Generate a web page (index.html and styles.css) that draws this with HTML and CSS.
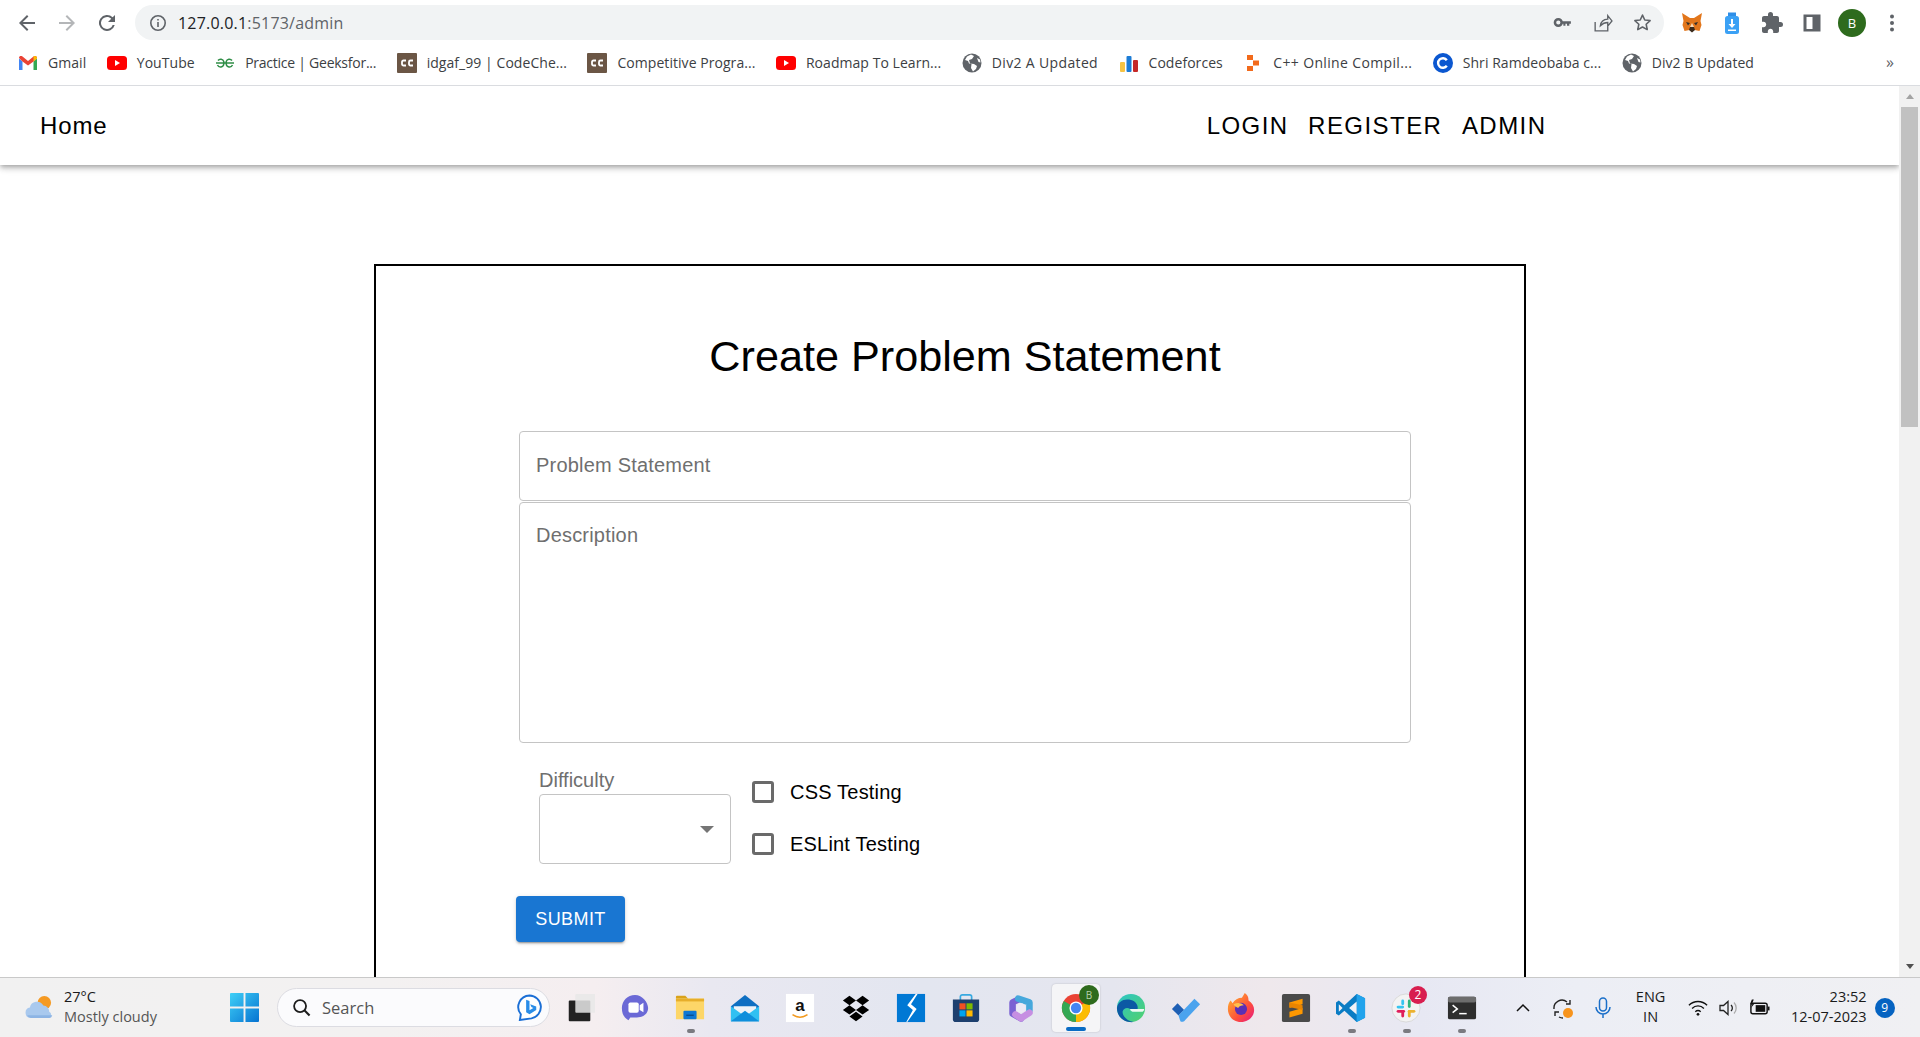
FILE: index.html
```html
<!DOCTYPE html>
<html lang="en">
<head>
    <meta charset="UTF-8">
    <meta name="viewport" content="width=device-width, initial-scale=1.0">
    <title>127.0.0.1:5173/admin</title>
    <link rel="stylesheet" href="styles.css">
</head>
<body>
    <svg class="defs" aria-hidden="true">
        <symbol id="globe" viewBox="0 0 20 20">
            <circle cx="10" cy="10" r="9.500" fill="#5f6368"/>
            <path d="M9 1.500 5 3.500 3 7l3 1 1 2.500 2.500.5L9 15l2 3.500 3-2.500 1-3-3-2-4-.5L7 7l3-1 2-3zM15 5l1.500 4 2 .5-.5-3z" fill="#fff"/>
        </symbol>
        <symbol id="yt" viewBox="0 0 20 20">
            <rect x="0" y="3" width="20" height="14" rx="3.500" fill="#f00"/>
            <path d="M8 7v6l5-3z" fill="#fff"/>
        </symbol>
        <symbol id="cc" viewBox="0 0 20 20">
            <rect width="20" height="20" rx="1" fill="#6b5645"/>
            <path d="M9 7.500H6.500A1.500 1.500 0 0 0 5 9v2a1.500 1.500 0 0 0 1.500 1.500H9M16 7.500h-2.500A1.500 1.500 0 0 0 12 9v2a1.500 1.500 0 0 0 1.500 1.500H16" fill="none" stroke="#fff" stroke-width="1.800"/>
        </symbol>
    </svg>

    <header class="browser">
        <div class="toolbar">
            <div class="tool-nav">
                <svg class="tool-icon" viewBox="0 0 24 24"><path d="M20 11H7.800l5.600-5.600L12 4l-8 8 8 8 1.400-1.400L7.800 13H20z" fill="#5f6368"/></svg>
                <svg class="tool-icon" viewBox="0 0 24 24"><path d="M4 11h12.200l-5.600-5.600L12 4l8 8-8 8-1.400-1.400 5.600-5.600H4z" fill="#b4b6b8"/></svg>
                <svg class="tool-icon" viewBox="0 0 24 24"><path d="M17.650 6.350A8 8 0 1 0 19.730 14h-2.080A6 6 0 1 1 12 6c1.660 0 3.140.69 4.220 1.780L13 11h7V4z" fill="#5f6368"/></svg>
            </div>
            <div class="omnibox">
                <svg class="omni-info" viewBox="0 0 18 18"><circle cx="9" cy="9" r="7.200" fill="none" stroke="#5f6368" stroke-width="1.600"/><path d="M8.200 8h1.600v5H8.200zM8.200 5h1.600v1.600H8.200z" fill="#5f6368"/></svg>
                <span class="url"><span class="url-host">127.0.0.1</span>:5173/admin</span>
                <div class="omni-actions">
                    <svg class="omni-icon" viewBox="0 0 20 20"><circle cx="6" cy="10" r="3.200" fill="none" stroke="#5f6368" stroke-width="2.400"/><path d="M9 8.800h9v2.400h-1.500V13h-2.200v-1.800h-1.500V13h-2v-1.800H9z" fill="#5f6368"/></svg>
                    <svg class="omni-icon" viewBox="0 0 20 20"><path d="M3 9.500V18h12v-4M8 13c.5-4 3-6 7-6.200V3.500l4 5-4 5V10c-3 0-5 1-7 3z" fill="none" stroke="#5f6368" stroke-width="1.300"/></svg>
                    <svg class="omni-icon" viewBox="0 0 24 24"><path d="M12 3.500l2.600 5.600 6.100.7-4.500 4.200 1.200 6.100L12 17.100l-5.400 3 1.200-6.100-4.500-4.200 6.100-.7z" fill="none" stroke="#5f6368" stroke-width="1.800" stroke-linejoin="round"/></svg>
                </div>
            </div>
            <div class="extensions">
                <svg class="ext-icon" viewBox="0 0 24 24">
                    <path d="M2 2l8 5h4l8-5-1.500 8 1 4-2 6-5-1h-5l-5 1-2-6 1-4z" fill="#e2761b"/>
                    <path d="M9 19l1-3h4l1 3-3 2.500z" fill="#3a2a1c"/>
                    <path d="M6 11l4 1-2 2.500zM18 11l-4 1 2 2.500z" fill="#33302c"/>
                    <path d="M10 16l2-4 2 4z" fill="#f5d9b8"/>
                </svg>
                <svg class="ext-icon" viewBox="0 0 24 24">
                    <path d="M8 1.500h8V5H8z" fill="#2f8fe8"/>
                    <rect x="5" y="5" width="14" height="18" rx="2.500" fill="#3ba1f5"/>
                    <path d="M11 8h2v5h2.500L12 17l-3.500-4H11z" fill="#fff"/>
                    <path d="M8 18.500h8V20H8z" fill="#fff"/>
                </svg>
                <svg class="ext-icon" viewBox="0 0 24 24"><path d="M20.500 11H19V7c0-1.100-.9-2-2-2h-4V3.500a2.500 2.500 0 0 0-5 0V5H4c-1.100 0-2 .9-2 2v3.800h1.500c1.500 0 2.700 1.200 2.700 2.700s-1.200 2.700-2.700 2.700H2V20c0 1.100.9 2 2 2h3.800v-1.500c0-1.500 1.200-2.700 2.700-2.700s2.700 1.200 2.700 2.700V22H17c1.100 0 2-.9 2-2v-4h1.500a2.500 2.500 0 0 0 0-5z" fill="#5f6368"/></svg>
                <svg class="ext-icon" viewBox="0 0 24 24"><path d="M3.500 3.500h17v17h-17zM6.500 6h0v12h6V6z" fill="#5f6368" fill-rule="evenodd"/></svg>
                <span class="avatar">B</span>
                <svg class="ext-icon" viewBox="0 0 24 24"><circle cx="12" cy="5.500" r="2" fill="#5f6368"/><circle cx="12" cy="12" r="2" fill="#5f6368"/><circle cx="12" cy="18.500" r="2" fill="#5f6368"/></svg>
            </div>
        </div>

        <nav class="bookmarks">
            <a class="bm">
                <svg class="bm-icon" viewBox="0 0 20 20">
                    <path d="M1 5.500V17h3.500V8.500z" fill="#4285f4"/>
                    <path d="M19 5.500V17h-3.500V8.500z" fill="#34a853"/>
                    <path d="M1 5c0-2 2-2.500 3.500-1.500L10 8l5.500-4.500C17 2.500 19 3 19 5l-3.500 3.500L10 12.500 4.500 8.500z" fill="#ea4335"/>
                    <path d="M15.500 3.500C17 2.500 19 3 19 5.500l-3.500 3z" fill="#fbbc04"/>
                </svg>
                Gmail
            </a>
            <a class="bm"><svg class="bm-icon"><use href="#yt"/></svg>YouTube</a>
            <a class="bm bm-tight">
                <svg class="bm-icon" viewBox="0 0 20 20"><path d="M1 10h18M3 7.500a3.300 3.300 0 0 1 5.800 1V11a3.300 3.300 0 0 1-6.300 1M17 7.500a3.300 3.300 0 0 0-5.800 1V11a3.300 3.300 0 0 0 6.300 1" fill="none" stroke="#2f8d46" stroke-width="1.500"/></svg>
                Practice | Geeksfor...
            </a>
            <a class="bm"><svg class="bm-icon"><use href="#cc"/></svg>idgaf_99 | CodeChe...</a>
            <a class="bm"><svg class="bm-icon"><use href="#cc"/></svg>Competitive Progra...</a>
            <a class="bm"><svg class="bm-icon"><use href="#yt"/></svg>Roadmap To Learn...</a>
            <a class="bm bm-wide"><svg class="bm-icon"><use href="#globe"/></svg>Div2 A Updated</a>
            <a class="bm">
                <svg class="bm-icon" viewBox="0 0 20 20"><rect x="1" y="9" width="5" height="10" rx="1" fill="#f6c343"/><rect x="7.500" y="3" width="5" height="16" rx="1" fill="#1c7cd6"/><rect x="14" y="7" width="5" height="12" rx="1" fill="#c62828"/></svg>
                Codeforces
            </a>
            <a class="bm bm-wide">
                <svg class="bm-icon" viewBox="0 0 20 20"><path d="M4 2h6v5H4zM10 7.500h6v5h-6zM4 13h6v5H4z" fill="#f26a1b"/></svg>
                C++ Online Compil...
            </a>
            <a class="bm">
                <svg class="bm-icon" viewBox="0 0 20 20"><circle cx="10" cy="10" r="10" fill="#0b57d0"/><path d="M13.800 7.200a4.800 4.800 0 1 0 0 5.600" fill="none" stroke="#fff" stroke-width="2.400"/></svg>
                Shri Ramdeobaba c...
            </a>
            <a class="bm"><svg class="bm-icon"><use href="#globe"/></svg>Div2 B Updated</a>
            <span class="bm-more">»</span>
        </nav>
    </header>

    <div class="viewport">
        <main class="page">
            <div class="appbar">
                <a class="app-home">Home</a>
                <div class="app-links">
                    <a>Login</a>
                    <a>Register</a>
                    <a>Admin</a>
                </div>
            </div>

            <section class="card">
                <h1 class="card-title">Create Problem Statement</h1>
                <form class="problem-form">
                    <input class="field field-title" type="text" placeholder="Problem Statement">
                    <textarea class="field field-desc" placeholder="Description"></textarea>
                    <div class="options">
                        <div class="difficulty">
                            <label class="difficulty-label">Difficulty</label>
                            <div class="select"><span class="select-arrow"></span></div>
                        </div>
                        <div class="checks">
                            <label class="check"><span class="check-box"></span>CSS Testing</label>
                            <label class="check"><span class="check-box"></span>ESLint Testing</label>
                        </div>
                    </div>
                    <button class="submit" type="button">SUBMIT</button>
                </form>
            </section>
        </main>

        <div class="scrollbar">
            <span class="scroll-up"></span>
            <div class="scroll-track"><div class="scroll-thumb"></div></div>
            <span class="scroll-down"></span>
        </div>
    </div>

    <footer class="taskbar">
        <div class="weather">
            <svg class="weather-icon" viewBox="0 0 32 28">
                <circle cx="21" cy="9" r="7" fill="#f59a23"/>
                <path d="M7 25a5.500 5.500 0 0 1-1-10.900A7.500 7.500 0 0 1 20 12a6 6 0 0 1 6 6.500 3.500 3.500 0 0 1 0 6.500z" fill="#a9c9ee"/>
                <path d="M7 25a5.500 5.500 0 0 1-3.800-3h26a3.500 3.500 0 0 1-3.200 3z" fill="#8db4e4"/>
            </svg>
            <div class="weather-text">
                <span class="weather-temp">27°C</span>
                <span class="weather-desc">Mostly cloudy</span>
            </div>
        </div>

        <svg class="win-logo" viewBox="0 0 30 30">
            <defs><linearGradient id="win" x1="0" y1="0" x2="1" y2="1"><stop offset="0" stop-color="#3fd0f7"/><stop offset="1" stop-color="#0673d1"/></linearGradient></defs>
            <path d="M1 0h13v14H0V1a1 1 0 0 1 1-1zM16 0h13a1 1 0 0 1 1 1v13H16zM0 16h14v14H1a1 1 0 0 1-1-1zM16 16h14v13a1 1 0 0 1-1 1H16z" fill="url(#win)"/>
        </svg>

        <div class="search-pill">
            <svg class="search-icon" viewBox="0 0 20 20"><circle cx="8.500" cy="8.500" r="6.300" fill="none" stroke="#1c1c1c" stroke-width="1.900"/><path d="M13 13l5.500 5.500" stroke="#1c1c1c" stroke-width="2.200"/></svg>
            <span class="search-text">Search</span>
            <svg class="bing-icon" viewBox="0 0 26 28">
                <path d="M13 1.500a12 12 0 0 1 2 23.800L3 27l1-6A12 12 0 0 1 13 1.500z" fill="#fff" stroke="#1b6fd6" stroke-width="2"/>
                <path d="M9.500 6l3.500 1.300v9.500l4-2.300-2-1-1.300-3 6.300 2.500v3.500L13 21l-3.500-2z" fill="#2a8de8"/>
            </svg>
        </div>

        <div class="pins">
            <div class="pin">
                <svg class="pin-icon" viewBox="0 0 32 32">
                    <rect x="4" y="8" width="23" height="22" rx="1" fill="#222"/>
                    <rect x="11" y="1" width="22" height="20" rx="1" fill="#e8e8e8" fill-opacity=".85"/>
                </svg>
            </div>
            <div class="pin">
                <svg class="pin-icon" viewBox="0 0 32 32">
                    <path d="M16 2C8 2 2 8 2 16c0 6 2 10 7 13l2-3h7c7 0 12-4 12-10S24 2 16 2z" fill="#6b69d6"/>
                    <rect x="9" y="10" width="11" height="11" rx="2" fill="#fff"/>
                    <path d="M21 13l4-2.500v10L21 18z" fill="#fff"/>
                </svg>
            </div>
            <div class="pin pin-open">
                <svg class="pin-icon" viewBox="0 0 32 32">
                    <path d="M1 4a1 1 0 0 1 1-1h9l3 3h-13z" fill="#d9a21b"/>
                    <path d="M1 6h30v22H1z" fill="#fdd668"/>
                    <path d="M1 6h30v3H1z" fill="#e7ae2a"/>
                    <rect x="9" y="19" width="14" height="9" rx="1" fill="#0f78d4"/>
                    <rect x="12" y="23" width="8" height="1.500" fill="#0b4f8f"/>
                </svg>
            </div>
            <div class="pin">
                <svg class="pin-icon" viewBox="0 0 32 32">
                    <path d="M16 2L1 14v16h30V14z" fill="#0e6fc2"/>
                    <path d="M4 14h24v8l-12 7-12-7z" fill="#eef3f8"/>
                    <path d="M1 14l15 11 15-11v16H1z" fill="#30c0f2"/>
                    <path d="M1 30l15-11 15 11z" fill="#0f8fdc"/>
                </svg>
            </div>
            <div class="pin">
                <svg class="pin-icon" viewBox="0 0 32 32">
                    <rect x="1" y="1" width="30" height="30" fill="#fff"/>
                    <text x="16" y="19" class="amazon-a">a</text>
                    <path d="M8 23c5 3.500 11 3.500 16 0" fill="none" stroke="#f29a1f" stroke-width="1.600"/>
                </svg>
            </div>
            <div class="pin">
                <svg class="pin-icon" viewBox="0 0 32 32"><path d="M9 3l7 5-7 5-7-5zM23 3l7 5-7 5-7-5zM9 13l7 5-7 5-7-5zM23 13l7 5-7 5-7-5zM16 20l7 5-7 5-7-5z" fill="#000"/></svg>
            </div>
            <div class="pin">
                <svg class="pin-icon" viewBox="0 0 32 32">
                    <rect x="1" y="1" width="30" height="30" fill="#0078d4"/>
                    <path d="M21 1l-9 12 6 5-7 13 1 0 10-14-6-5 7-11z" fill="#fff"/>
                </svg>
            </div>
            <div class="pin">
                <svg class="pin-icon" viewBox="0 0 32 32">
                    <path d="M10 8V4a2 2 0 0 1 2-2h8a2 2 0 0 1 2 2v4" fill="none" stroke="#39a9e0" stroke-width="1.800"/>
                    <path d="M2 7h28v21a3 3 0 0 1-3 3H5a3 3 0 0 1-3-3z" fill="#1d3f6e"/>
                    <rect x="9" y="11" width="6.500" height="6.500" fill="#f25022"/>
                    <rect x="16.500" y="11" width="6.500" height="6.500" fill="#7fba00"/>
                    <rect x="9" y="18.500" width="6.500" height="6.500" fill="#00a4ef"/>
                    <rect x="16.500" y="18.500" width="6.500" height="6.500" fill="#ffb900"/>
                </svg>
            </div>
            <div class="pin">
                <svg class="pin-icon" viewBox="0 0 32 32">
                    <g fill="none" stroke-width="7" stroke-linecap="round" stroke-linejoin="round">
                        <path d="M16 27L7 22V10l6-3" stroke="#7a62d3"/>
                        <path d="M13 6l12 4v8" stroke="#46a8dc"/>
                        <path d="M25 21l-9 6-6-4" stroke="#c68fe2"/>
                    </g>
                    <circle cx="16" cy="16" r="5" fill="#eceaf6"/>
                </svg>
            </div>
            <div class="pin pin-active">
                <svg class="pin-icon" viewBox="0 0 32 32">
                    <circle cx="16" cy="16" r="15" fill="#ea4335"/>
                    <path d="M16 16L29 8.500A15 15 0 0 1 16 31z" fill="#fbbc04"/>
                    <path d="M16 16L16 31A15 15 0 0 1 3 8.500z" fill="#34a853"/>
                    <circle cx="16" cy="16" r="7" fill="#fff"/>
                    <circle cx="16" cy="16" r="5.500" fill="#4285f4"/>
                </svg>
                <span class="pin-profile">B</span>
            </div>
            <div class="pin">
                <svg class="pin-icon" viewBox="0 0 32 32">
                    <defs><linearGradient id="edge" x1="0" y1="0" x2="1" y2="1"><stop offset="0" stop-color="#2cc5c9"/><stop offset="1" stop-color="#52d16a"/></linearGradient></defs>
                    <circle cx="16" cy="16" r="15" fill="url(#edge)"/>
                    <path d="M1 16C2 9 8 6 14 7c6 1 10 5 9 10h-8c-3-2-7-1-8 3 0 5 5 10 12 11C8 32 1 25 1 16z" fill="#0c59a4"/>
                    <path d="M15 17h15c0 2-1 3-3 3h-8c-2 0-4-1-4-3z" fill="#fff" fill-opacity=".9"/>
                </svg>
            </div>
            <div class="pin">
                <svg class="pin-icon" viewBox="0 0 32 32">
                    <path d="M1 17l6-6 7 7-6 6z" fill="#1e5fb4"/>
                    <path d="M8 24L25 6l6 6-17 18c-2 1-3 1-4 0z" fill="#4aa3ee"/>
                </svg>
            </div>
            <div class="pin">
                <svg class="pin-icon" viewBox="0 0 32 32">
                    <defs><linearGradient id="fox" x1="0" y1="0" x2="1" y2="1"><stop offset="0" stop-color="#ffbd2e"/><stop offset=".6" stop-color="#ff4f3a"/><stop offset="1" stop-color="#e31587"/></linearGradient></defs>
                    <path d="M16 31C7 31 2 24 2 17c0-4 1-7 3-9l2 3c2-4 6-6 10-6l3-5c4 3 4 6 4 8 4 3 6 6 6 10 0 7-6 13-14 13z" fill="url(#fox)"/>
                    <circle cx="16" cy="17" r="6.500" fill="#5b2fb5"/>
                    <path d="M8 12c4-2 8-2 11 1-3 0-5 1-6 3-2-1-4-2-5-4z" fill="#ffc04a"/>
                </svg>
            </div>
            <div class="pin">
                <svg class="pin-icon" viewBox="0 0 32 32">
                    <rect x="1" y="1" width="30" height="30" rx="2" fill="#4a4a4a"/>
                    <path d="M23 6v6L9 16v-6zM9 20l14-4v6L9 26z" fill="#ff9800"/>
                    <path d="M9 15l14 3v-5L9 10z" fill="#e98400"/>
                </svg>
            </div>
            <div class="pin pin-open">
                <svg class="pin-icon" viewBox="0 0 32 32">
                    <path d="M22 1l9 4.500v21L22 31 9 19l-6 5-3-2v-12l3-2 6 5z" fill="#0a7cc4"/>
                    <path d="M22 1l9 4.500v21L22 31z" fill="#22a3ec"/>
                    <path d="M22 9l-8 7 8 7z" fill="#f1f2f7"/>
                    <path d="M3 12v8l4-4z" fill="#f1f2f7"/>
                </svg>
            </div>
            <div class="pin pin-open">
                <svg class="pin-icon" viewBox="0 0 32 32">
                    <circle cx="16" cy="16" r="15" fill="#f3f3f3" stroke="#d8d8d8"/>
                    <rect x="6" y="13.500" width="8" height="3" rx="1.500" fill="#36c5f0"/>
                    <rect x="11" y="7" width="3" height="6" rx="1.500" fill="#36c5f0"/>
                    <rect x="18" y="7" width="3" height="9" rx="1.500" fill="#2eb67d"/>
                    <rect x="18" y="18" width="8" height="3" rx="1.500" fill="#ecb22e"/>
                    <rect x="18" y="18" width="3" height="8" rx="1.500" fill="#ecb22e"/>
                    <rect x="6" y="18" width="9" height="3" rx="1.500" fill="#e01e5a"/>
                    <rect x="11" y="18" width="3" height="8" rx="1.500" fill="#e01e5a"/>
                </svg>
                <span class="pin-count">2</span>
            </div>
            <div class="pin pin-open">
                <svg class="pin-icon" viewBox="0 0 32 32">
                    <rect x="1" y="4" width="30" height="24" rx="2" fill="#2e2e2e"/>
                    <rect x="1" y="4" width="30" height="6" rx="2" fill="#6d6d6d"/>
                    <path d="M6 13l5 4-5 4" fill="none" stroke="#fff" stroke-width="1.600"/>
                    <path d="M13 22h8" stroke="#fff" stroke-width="1.600"/>
                </svg>
            </div>
        </div>

        <div class="tray">
            <svg class="tray-chevron" viewBox="0 0 16 16"><path d="M2 11l6-6 6 6" fill="none" stroke="#111" stroke-width="1.500"/></svg>
            <svg class="tray-sync" viewBox="0 0 22 24">
                <path d="M2 13a8 8 0 0 1 13-7M18 4v4h-4M3 20v-4h4M7 21a8 8 0 0 0 4 1" fill="none" stroke="#222" stroke-width="1.400"/>
                <circle cx="16" cy="17" r="5" fill="#f7941d"/>
            </svg>
            <svg class="tray-mic" viewBox="0 0 18 24">
                <rect x="5.500" y="2" width="7" height="13" rx="3.500" fill="none" stroke="#1a6fc9" stroke-width="1.500"/>
                <path d="M2 11a7 7 0 0 0 14 0M9 18v4" fill="none" stroke="#1a6fc9" stroke-width="1.500"/>
            </svg>
            <div class="tray-lang"><span>ENG</span><span>IN</span></div>
            <svg class="tray-wifi" viewBox="0 0 22 18">
                <path d="M1 6a14 14 0 0 1 20 0M4.500 9.500a9 9 0 0 1 13 0M8 13a4.500 4.500 0 0 1 6 0" fill="none" stroke="#111" stroke-width="1.500"/>
                <circle cx="11" cy="16" r="1.500" fill="#111"/>
            </svg>
            <svg class="tray-sound" viewBox="0 0 20 18">
                <path d="M1 6.500h3.500L9 2.500v13l-4.500-4H1z" fill="none" stroke="#222" stroke-width="1.300"/>
                <path d="M12 6a4 4 0 0 1 0 6" fill="none" stroke="#222" stroke-width="1.300"/>
                <path d="M15 3.500a8 8 0 0 1 0 11" fill="none" stroke="#aaa" stroke-width="1.300"/>
            </svg>
            <svg class="tray-battery" viewBox="0 0 22 18">
                <rect x="2" y="4" width="17" height="11" rx="2" fill="none" stroke="#111" stroke-width="1.500"/>
                <rect x="7" y="6" width="10" height="7" fill="#111"/>
                <path d="M19.500 7.500h2v4h-2z" fill="#111"/>
                <path d="M3 0L1 5h2.500L2 9l4-5H3.500L5 0z" fill="#111"/>
            </svg>
            <div class="tray-clock"><span>23:52</span><span>12-07-2023</span></div>
            <span class="tray-badge">9</span>
        </div>
    </footer>
</body>
</html>
```

FILE: styles.css
```css
* {
    box-sizing: border-box;
}
html, body {
    height: 100%;
}
body {
    margin: 0;
    display: flex;
    flex-direction: column;
    overflow: hidden;
    background-color: #fff;
    font-family: "Liberation Sans", Arial, sans-serif;
}
.defs {
    display: none;
}

/* browser chrome */
.browser {
    height: 86px;
    flex-shrink: 0;
    background-color: #fff;
    border-bottom: 1px solid #dadce0;
    font-family: "Open Sans", sans-serif;
}
.toolbar {
    height: 45px;
    padding-top: 5px;
    display: flex;
    align-items: flex-start;
}
.tool-nav {
    width: 135px;
    height: 35px;
    padding-left: 15px;
    display: flex;
    align-items: center;
    gap: 16px;
}
.tool-icon {
    width: 24px;
    height: 24px;
}
.omnibox {
    width: 1529px;
    height: 35px;
    padding: 0 11px 0 14px;
    display: flex;
    align-items: center;
    background-color: #f1f3f4;
    border-radius: 18px;
}
.omni-info {
    width: 18px;
    height: 18px;
}
.url {
    margin-left: 11px;
    font-size: 16px;
    letter-spacing: 0.2px;
    color: #5f6368;
}
.url-host {
    color: #202124;
}
.omni-actions {
    margin-left: auto;
    display: flex;
    align-items: center;
    gap: 19px;
}
.omni-icon {
    width: 21px;
    height: 21px;
}
.extensions {
    margin-left: 16px;
    height: 35px;
    display: flex;
    align-items: center;
    gap: 16px;
}
.ext-icon {
    width: 24px;
    height: 24px;
}
.avatar {
    width: 28px;
    height: 28px;
    margin: 0 -2px;
    display: flex;
    align-items: center;
    justify-content: center;
    border-radius: 50%;
    background-color: #2e6b1d;
    color: #fff;
    font-size: 13px;
}

.bookmarks {
    height: 35px;
    padding-left: 18px;
    display: flex;
    align-items: center;
    gap: 20.500px;
    position: relative;
}
.bm {
    display: flex;
    align-items: center;
    gap: 10px;
    font-size: 14px;
    letter-spacing: 0.05px;
    color: #3c4043;
    white-space: nowrap;
}
.bm-tight {
    letter-spacing: -0.25px;
}
.bm-wide {
    letter-spacing: 0.35px;
}
.bm-icon {
    width: 20px;
    height: 20px;
    flex-shrink: 0;
}
.bm-more {
    position: absolute;
    right: 26px;
    top: 6px;
    font-size: 16px;
    color: #5f6368;
}

/* page */
.viewport {
    flex: 1;
    min-height: 0;
    display: flex;
}
.page {
    width: 1899px;
    overflow: hidden;
}
.appbar {
    height: 79px;
    padding: 0 352.500px 0 40px;
    display: flex;
    align-items: center;
    justify-content: space-between;
    background-color: #fff;
    box-shadow: 0 2px 4px -1px rgba(0,0,0,.2), 0 4px 5px 0 rgba(0,0,0,.14), 0 1px 10px 0 rgba(0,0,0,.12);
    font-size: 24px;
    letter-spacing: 0.9px;
    color: #000;
}
.app-links {
    display: flex;
    gap: 19.500px;
    text-transform: uppercase;
    letter-spacing: 1.450px;
}

.card {
    width: 1152px;
    height: 900px;
    margin: 99px 0 0 374px;
    padding-top: 64px;
    border: 2px solid #000;
}
.card-title {
    margin: 0 0 49px;
    padding-left: 30px;
    text-align: center;
    font-size: 43.200px;
    line-height: 52px;
    font-weight: 400;
    color: #000;
}
.problem-form {
    width: 892px;
    margin-left: 143px;
}
.field {
    display: block;
    width: 100%;
    padding: 0 16px;
    border: 1px solid #c4c4c4;
    border-radius: 4px;
    outline: none;
    font-family: inherit;
    font-size: 20px;
    letter-spacing: 0.2px;
    color: #000;
    background-color: #fff;
}
.field::placeholder {
    color: #6f6f6f;
    opacity: 1;
}
.field-title {
    height: 70px;
    padding-bottom: 2px;
}
.field-desc {
    height: 241px;
    margin-top: 1px;
    padding-top: 21px;
    resize: none;
}

.options {
    margin-top: 25px;
    padding-left: 20px;
    display: flex;
    gap: 21px;
}
.difficulty {
    width: 192px;
}
.difficulty-label {
    display: block;
    height: 26px;
    font-size: 20px;
    line-height: 24px;
    color: #6f6f6f;
}
.select {
    height: 70px;
    padding-right: 16px;
    display: flex;
    align-items: center;
    justify-content: flex-end;
    border: 1px solid #c4c4c4;
    border-radius: 4px;
}
.select-arrow {
    width: 0;
    height: 0;
    border-left: 7px solid transparent;
    border-right: 7px solid transparent;
    border-top: 7px solid #757575;
}
.checks {
    padding-top: 13px;
    display: flex;
    flex-direction: column;
    gap: 30px;
}
.check {
    height: 22px;
    display: flex;
    align-items: center;
    gap: 16px;
    font-size: 20px;
    letter-spacing: 0.2px;
    color: #000;
}
.check-box {
    width: 22px;
    height: 22px;
    border: 3px solid #6a6a6a;
    border-radius: 3px;
}
.submit {
    display: block;
    width: 109px;
    height: 46px;
    margin: 32px 0 0 -3px;
    border: 0;
    border-radius: 4px;
    background-color: #1976d2;
    color: #fff;
    font-family: inherit;
    font-size: 18px;
    letter-spacing: 0.4px;
    box-shadow: 0 3px 1px -2px rgba(0,0,0,.2), 0 2px 2px 0 rgba(0,0,0,.14), 0 1px 5px 0 rgba(0,0,0,.12);
}

/* page scrollbar */
.scrollbar {
    width: 21px;
    display: flex;
    flex-direction: column;
    align-items: center;
    background-color: #f1f1f1;
}
.scroll-up, .scroll-down {
    width: 0;
    height: 0;
    margin: 8px 0;
    border-left: 4px solid transparent;
    border-right: 4px solid transparent;
}
.scroll-up {
    border-bottom: 5px solid #a3a3a3;
}
.scroll-down {
    border-top: 5px solid #505050;
}
.scroll-track {
    flex: 1;
    width: 17px;
}
.scroll-thumb {
    width: 17px;
    height: 320px;
    background-color: #c1c1c1;
}

/* windows taskbar */
.taskbar {
    height: 60px;
    flex-shrink: 0;
    display: flex;
    align-items: center;
    position: relative;
    border-top: 1px solid #c9c9c9;
    background: linear-gradient(90deg, #f1f1f1 0, #f3f1f1 20%, #f5eef0 31%, #e9e8f1 37%, #e3e6f0 48%, #e5e6ef 58%, #efe8ec 66%, #e7e8f3 74%, #eceef5 82%, #f0f0f3 100%);
    font-family: "Open Sans", sans-serif;
}
.weather {
    width: 230px;
    padding-left: 24px;
    display: flex;
    align-items: center;
    gap: 9px;
}
.weather-icon {
    width: 31px;
    height: 27px;
}
.weather-text {
    margin-top: -2px;
    display: flex;
    flex-direction: column;
    font-size: 14.500px;
    line-height: 20px;
}
.weather-temp {
    color: #1a1a1a;
}
.weather-desc {
    color: #555;
}
.win-logo {
    width: 29px;
    height: 29px;
}
.search-pill {
    width: 273px;
    height: 39px;
    margin-left: 18px;
    padding: 0 7px 0 14px;
    display: flex;
    align-items: center;
    gap: 11px;
    background-color: #fbfbfd;
    border: 1px solid #dcdce2;
    border-radius: 20px;
}
.search-icon {
    width: 19px;
    height: 19px;
}
.search-text {
    font-size: 16.500px;
    color: #555;
}
.bing-icon {
    width: 25px;
    height: 27px;
    margin-left: auto;
}
.pins {
    margin-left: 2.500px;
    display: flex;
}
.pin {
    position: relative;
    width: 55.100px;
    height: 48px;
    display: flex;
    align-items: center;
    justify-content: center;
}
.pin-icon {
    width: 30px;
    height: 30px;
}
.pin-open::after {
    content: "";
    position: absolute;
    left: 24px;
    bottom: -1px;
    width: 8px;
    height: 4px;
    border-radius: 2px;
    background-color: #7a7a80;
}
.pin-active {
    width: 48px;
    margin: 0 3.550px;
    background-color: #f5f5f7;
    border-radius: 4px;
    box-shadow: 0 0 2px rgba(0,0,0,.2);
}
.pin-active::after {
    content: "";
    position: absolute;
    left: 14px;
    bottom: 1px;
    width: 20px;
    height: 4px;
    border-radius: 2px;
    background-color: #0a6cc4;
}
.pin-profile {
    position: absolute;
    top: 1px;
    right: 1px;
    width: 20px;
    height: 20px;
    display: flex;
    align-items: center;
    justify-content: center;
    border-radius: 50%;
    background-color: #2e6b1d;
    color: #b9d0ae;
    font-size: 10px;
}
.pin-count {
    position: absolute;
    top: 2px;
    right: 7px;
    width: 18px;
    height: 18px;
    display: flex;
    align-items: center;
    justify-content: center;
    border-radius: 50%;
    background-color: #d81e4f;
    color: #fff;
    font-size: 12px;
}
.amazon-a {
    font-family: "Liberation Sans", sans-serif;
    font-size: 18px;
    font-weight: 700;
    text-anchor: middle;
    fill: #111;
}

.tray {
    flex: 1;
    padding-left: 25.500px;
    display: flex;
    align-items: center;
    color: #1a1a1a;
    font-size: 14.500px;
}
.tray-chevron {
    width: 16px;
    height: 16px;
}
.tray-sync {
    width: 22px;
    height: 24px;
    margin-left: 21px;
}
.tray-mic {
    width: 18px;
    height: 24px;
    margin-left: 20px;
}
.tray-lang {
    width: 44px;
    margin: -2px 0 0 17px;
    display: flex;
    flex-direction: column;
    align-items: center;
    line-height: 20px;
}
.tray-wifi {
    width: 20px;
    height: 18px;
    margin-left: 15px;
}
.tray-sound {
    width: 20px;
    height: 18px;
    margin-left: 11px;
}
.tray-battery {
    width: 21px;
    height: 18px;
    margin-left: 10px;
}
.tray-clock {
    width: 97px;
    margin-top: -2px;
    display: flex;
    flex-direction: column;
    align-items: flex-end;
    line-height: 20px;
}
.tray-badge {
    width: 20px;
    height: 20px;
    margin-left: 8px;
    display: flex;
    align-items: center;
    justify-content: center;
    border-radius: 50%;
    background-color: #0563c1;
    color: #fff;
    font-size: 12px;
}
```
